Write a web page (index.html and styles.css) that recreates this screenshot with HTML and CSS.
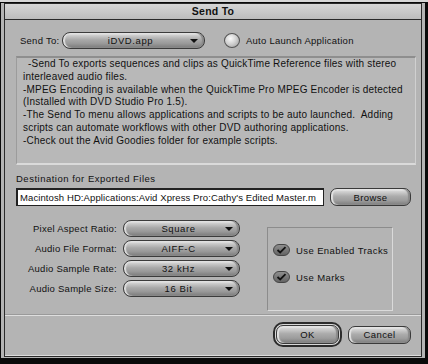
FILE: index.html
```html
<!DOCTYPE html>
<html lang="en">
<head>
    <meta charset="UTF-8">
    <title>Send To</title>
    <link rel="stylesheet" href="styles.css">
</head>
<body>
    <div class="window">
        <div class="panel">
            <div class="titlebar">Send To</div>

            <div class="content">
                <div class="send-row">
                    <span class="send-label">Send To:</span>
                    <div class="popup send-popup"><span class="popup-text">iDVD.app</span><span class="arrow"></span></div>
                    <span class="radio"></span>
                    <span class="radio-label">Auto Launch Application</span>
                </div>

                <div class="info">
                    <p class="first">-Send To exports sequences and clips as QuickTime Reference files with stereo</p>
                    <p>interleaved audio files.</p>
                    <p>-MPEG Encoding is available when the QuickTime Pro MPEG Encoder is detected</p>
                    <p>(Installed with DVD Studio Pro 1.5).</p>
                    <p>-The Send To menu allows applications and scripts to be auto launched.&nbsp; Adding</p>
                    <p>scripts can automate workflows with other DVD authoring applications.</p>
                    <p>-Check out the Avid Goodies folder for example scripts.</p>
                </div>

                <div class="dest-label">Destination for Exported Files</div>
                <div class="dest-row">
                    <div class="field">Macintosh HD:Applications:Avid Xpress Pro:Cathy's Edited Master.m</div>
                    <button class="btn browse">Browse</button>
                </div>

                <div class="options">
                    <div class="settings">
                        <div class="setting">
                            <span class="setting-label">Pixel Aspect Ratio:</span>
                            <div class="popup"><span class="popup-text">Square</span><span class="arrow"></span></div>
                        </div>
                        <div class="setting">
                            <span class="setting-label">Audio File Format:</span>
                            <div class="popup"><span class="popup-text">AIFF-C</span><span class="arrow"></span></div>
                        </div>
                        <div class="setting">
                            <span class="setting-label">Audio Sample Rate:</span>
                            <div class="popup"><span class="popup-text">32 kHz</span><span class="arrow"></span></div>
                        </div>
                        <div class="setting">
                            <span class="setting-label">Audio Sample Size:</span>
                            <div class="popup"><span class="popup-text">16 Bit</span><span class="arrow"></span></div>
                        </div>
                    </div>

                    <div class="group">
                        <div class="check-row">
                            <span class="check"><svg width="11" height="8" viewBox="0 0 11 8"><path d="M1.5 4 L4.2 6.5 L9.5 1.2" fill="none" stroke="#111" stroke-width="1.8"/></svg></span>
                            <span>Use Enabled Tracks</span>
                        </div>
                        <div class="check-row">
                            <span class="check"><svg width="11" height="8" viewBox="0 0 11 8"><path d="M1.5 4 L4.2 6.5 L9.5 1.2" fill="none" stroke="#111" stroke-width="1.8"/></svg></span>
                            <span>Use Marks</span>
                        </div>
                    </div>
                </div>
            </div>

            <div class="separator"></div>

            <div class="footer">
                <div class="default-ring"><button class="btn ok">OK</button></div>
                <button class="btn cancel">Cancel</button>
            </div>
        </div>
    </div>
</body>
</html>
```

FILE: styles.css
```css
body {
    margin: 0;
    background: #d6d6d6;
    font-family: 'Liberation Sans', Arial, sans-serif;
    font-size: 9.5px;
    letter-spacing: 0.25px;
    color: #111;
}
.window {
    box-sizing: border-box;
    width: 428px;
    height: 362px;
    margin-top: 2px;
    border: 1px solid #0a0a0a;
    border-right-width: 3px;
    border-bottom-width: 6px;
    background: #b4b4b4;
    padding: 0 3px 1px 3px;
}
.panel {
    box-sizing: border-box;
    height: 100%;
    border: 1px solid #2a2a2a;
    background: #b4b4b4;
    box-shadow: inset 0 -1px 0 #dcdcdc;
    display: flex;
    flex-direction: column;
}
.titlebar {
    height: 15px;
    line-height: 15px;
    text-align: center;
    font-weight: bold;
    font-size: 10.5px;
    background: linear-gradient(#d6d6d6, #bcbcbc);
    border-bottom: 1px solid #2a2a2a;
}
.content {
    padding: 0 5px 0 11px;
}
.send-row {
    display: flex;
    align-items: center;
    height: 17px;
    margin-top: 12px;
    padding-left: 4px;
}
.send-label {
    width: 42px;
}
.popup {
    box-sizing: border-box;
    display: flex;
    align-items: center;
    height: 17px;
    width: 117px;
    padding: 0 6px 0 8px;
    border: 1px solid #3c3c3c;
    border-radius: 8px;
    background: linear-gradient(#f6f6f6 0, #cfcfcf 14%, #a9a9a9 45%, #999 70%, #7a7a7a 100%);
    box-shadow: inset 2px 0 1px #dedede, inset -2px 0 1px #8a8a8a;
}
.send-popup {
    width: 143px;
}
.popup-text {
    flex: 1;
    text-align: center;
    letter-spacing: 0.6px;
}
.arrow {
    width: 0;
    height: 0;
    border-left: 4px solid transparent;
    border-right: 4px solid transparent;
    border-top: 4px solid #111;
}
.radio {
    box-sizing: border-box;
    width: 16px;
    height: 15px;
    margin-left: 19px;
    border: 1px solid #555;
    border-radius: 50%;
    background: radial-gradient(circle at 40% 35%, #fafafa 0, #d2d2d2 45%, #9a9a9a 100%);
}
.radio-label {
    margin-left: 6px;
}
.info {
    box-sizing: border-box;
    height: 109px;
    margin-top: 7px;
    padding: 0 4px 0 6px;
    background: #b8b8b8;
    border-top: 2px solid #8e8e8e;
    border-left: 1px solid #9c9c9c;
    border-right: 1px solid #d0d0d0;
    border-bottom: 2px solid #dadada;
    font-size: 10px;
    letter-spacing: 0.2px;
    line-height: 12.8px;
    white-space: nowrap;
}
.info p {
    margin: 0;
}
.info .first {
    padding-left: 5px;
}
.dest-label {
    margin-top: 8px;
    line-height: 12px;
    letter-spacing: 0.5px;
}
.dest-row {
    display: flex;
    margin-top: 3px;
}
.field {
    box-sizing: border-box;
    width: 308px;
    height: 18px;
    line-height: 15px;
    padding: 0 2px;
    background: #fff;
    border: 1px solid #222;
    border-top-width: 2px;
    border-left-width: 2px;
    white-space: nowrap;
    overflow: hidden;
    letter-spacing: 0.1px;
}
.btn {
    box-sizing: border-box;
    font-family: inherit;
    font-size: 9.5px;
    color: #111;
    border: 1px solid #3a3a3a;
    border-radius: 7px;
    background: linear-gradient(#f6f6f6 0, #d2d2d2 15%, #acacac 45%, #9c9c9c 72%, #7c7c7c 100%);
    box-shadow: inset 2px 0 1px #e2e2e2, inset -2px 0 1px #8a8a8a;
    padding: 0;
    letter-spacing: 0.4px;
}
.browse {
    width: 81px;
    height: 18px;
    margin-left: 6px;
}
.options {
    display: flex;
    margin-top: 14px;
}
.settings {
    display: flex;
    flex-direction: column;
    gap: 3px;
}
.setting {
    display: flex;
    align-items: center;
}
.setting-label {
    width: 101px;
    text-align: right;
    margin-right: 6px;
    letter-spacing: 0.25px;
}
.group {
    box-sizing: border-box;
    width: 126px;
    height: 84px;
    margin: 7px 0 0 27px;
    border: 1px solid #8c8c8c;
    border-right-color: #dadada;
    border-bottom-color: #dadada;
    padding: 16px 0 0 5px;
    display: flex;
    flex-direction: column;
    gap: 15px;
}
.check-row {
    display: flex;
    align-items: center;
    gap: 6px;
    height: 12px;
    letter-spacing: 0.4px;
}
.check {
    box-sizing: border-box;
    width: 17px;
    height: 12px;
    border: 1px solid #444;
    border-radius: 6px;
    background: linear-gradient(#8e8e8e, #646464);
    display: flex;
    align-items: center;
    justify-content: center;
}
.separator {
    margin-top: 3px;
    border-top: 1px solid #9a9a9a;
    border-bottom: 1px solid #dedede;
}
.footer {
    display: flex;
    align-items: center;
    justify-content: flex-end;
    gap: 6px;
    padding: 6px 10px 0 0;
}
.default-ring {
    box-sizing: border-box;
    width: 69px;
    height: 25px;
    padding: 1px;
    border: 2px solid #2c2c2c;
    border-radius: 10px;
    background: #d8d8d8;
    display: flex;
}
.ok {
    flex: 1;
}
.cancel {
    width: 63px;
    height: 18px;
}
```
